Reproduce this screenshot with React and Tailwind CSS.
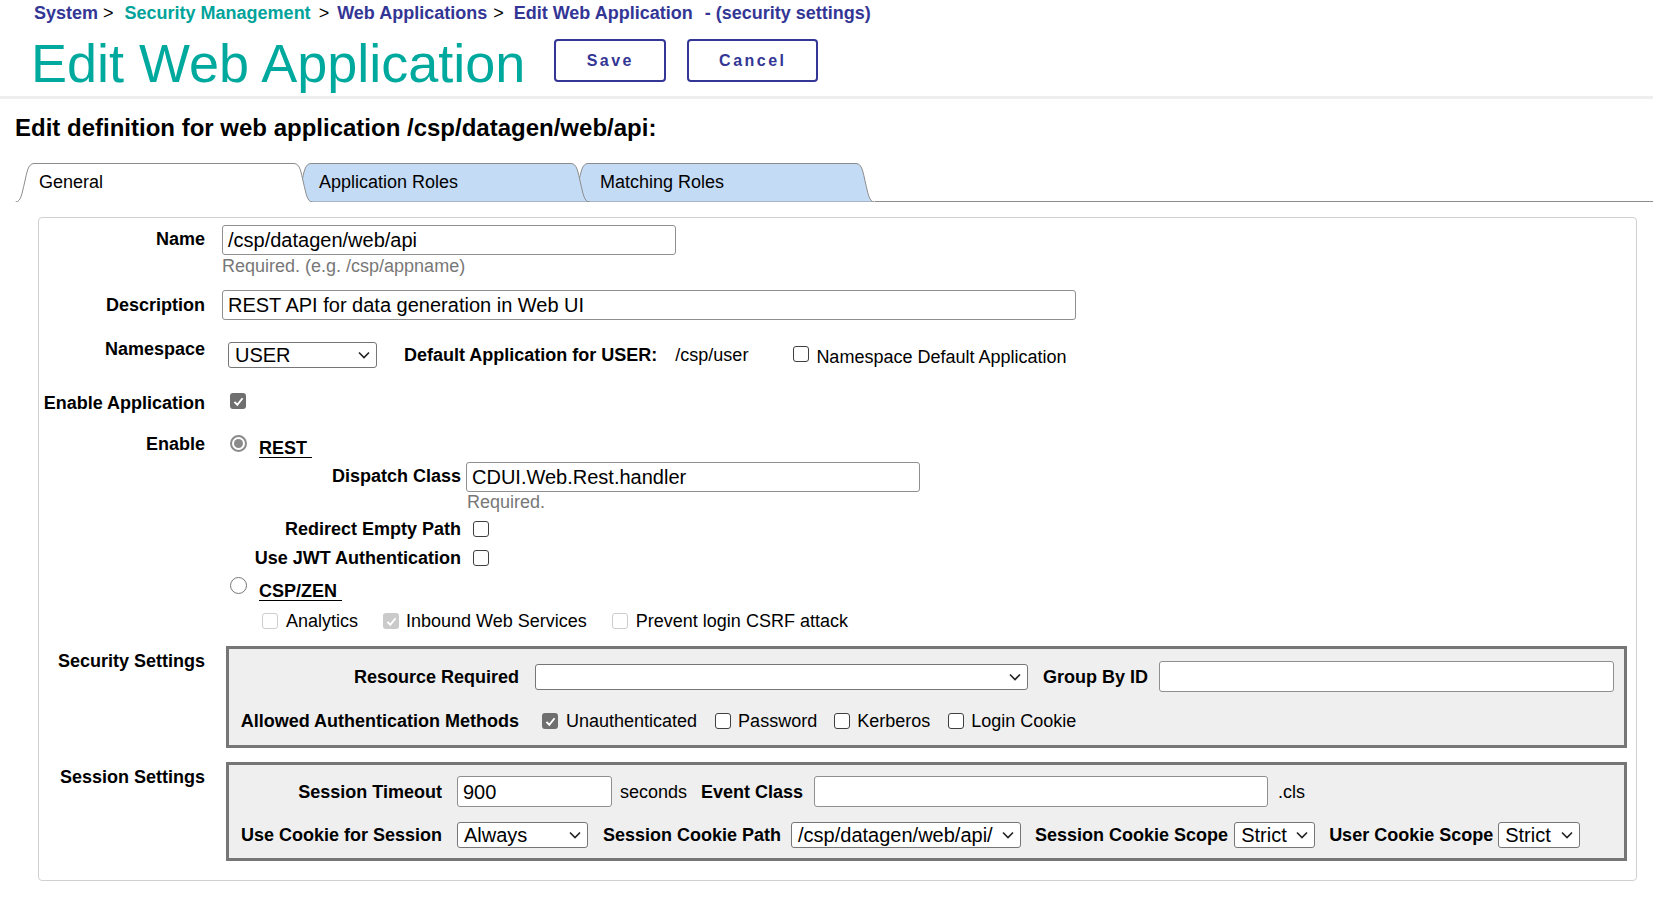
import React from 'react';

var label = 'text-[18px] font-bold leading-[22px] text-black whitespace-nowrap';
var plain = 'text-[18px] leading-[22px] text-black whitespace-nowrap';

function Chevron() {
  return (
    <svg width="12" height="8" viewBox="0 0 12 8" className="shrink-0">
      <path d="M1 1.5 L6 6.5 L11 1.5" stroke="#222" strokeWidth="1.6" fill="none" />
    </svg>
  );
}

function Select({ className, text }) {
  return (
    <div className={'flex items-center justify-between h-[26px] border border-[#767676] rounded-[3px] bg-white pl-[6px] pr-[6px] text-[20px] leading-none text-black whitespace-nowrap shrink-0 ' + className}>
      <span>{text}</span>
      <Chevron />
    </div>
  );
}

function Input({ className, children }) {
  return (
    <div className={'flex items-center border border-[#8f8f8f] rounded-[3px] bg-white px-[5px] text-[20px] leading-none text-black whitespace-nowrap shrink-0 ' + className}>
      {children}
    </div>
  );
}

function Check({ checked, disabled, className }) {
  if (checked) {
    return (
      <span className={'w-4 h-4 rounded-[3px] flex items-center justify-center shrink-0 ' + (disabled ? 'bg-[#cacaca] ' : 'bg-[#6f6f6f] ') + (className || '')}>
        <svg viewBox="0 0 16 16" className="w-[13px] h-[13px]">
          <path d="M3 8.5 L6.5 12 L13 4" stroke="white" strokeWidth="2.4" fill="none" />
        </svg>
      </span>
    );
  }
  return (
    <span className={'w-4 h-4 rounded-[3px] border bg-white shrink-0 ' + (disabled ? 'border-[#cdcdcd] ' : 'border-[#3f3f3f] ') + (className || '')} />
  );
}

function Radio({ checked, className }) {
  if (checked) {
    return (
      <span className={'w-[17px] h-[17px] rounded-full border-2 border-[#8a8a8a] bg-white flex items-center justify-center shrink-0 ' + className}>
        <span className="w-[9px] h-[9px] rounded-full bg-[#8a8a8a]" />
      </span>
    );
  }
  return <span className={'w-[17px] h-[17px] rounded-full border border-[#767676] bg-white shrink-0 ' + className} />;
}

function Tab({ title, width, active, pl, z, first }) {
  var w = width;
  var d = 'M0.5,39 C6,39 7,30 9.5,20 C12,9 13,0.5 19,0.5 L' + (w - 19) + ',0.5 C' + (w - 13) + ',0.5 ' + (w - 12) + ',9 ' + (w - 9.5) + ',20 C' + (w - 7) + ',30 ' + (w - 6) + ',39 ' + (w - 0.5) + ',39';
  return (
    <div className={'relative h-[39px] shrink-0 ' + z + (first ? '' : ' -ml-[21px]')} style={{ width: w }}>
      <svg width={w} height="39" className="absolute inset-0">
        <path d={active ? d : d + ' Z'} fill={active ? '#ffffff' : '#c4dbf6'} stroke="#8c8c8c" strokeWidth="1" />
      </svg>
      <div className={'relative h-full flex items-center text-[18px] text-black ' + pl}>{title}</div>
    </div>
  );
}

export default function App() {
  return (
    <div className="w-[1653px] h-[897px] bg-white overflow-hidden font-['Liberation_Sans',Arial,sans-serif] text-black">
      {/* header */}
      <div className="border-b-[3px] border-[#eeeeee] pb-[6px]">
        <div className="h-[26px] pt-[2px] pl-[34px] flex items-start text-[18px] leading-[22px] whitespace-nowrap">
          <span className="font-bold text-[#333695]">System</span>
          <span className="ml-[5px] mr-[11px]">&gt;</span>
          <span className="font-bold text-[#00a39a]">Security Management</span>
          <span className="ml-[8px] mr-[8px]">&gt;</span>
          <span className="font-bold text-[#333695]">Web Applications</span>
          <span className="ml-[6px] mr-[10px]">&gt;</span>
          <span className="font-bold text-[#333695]">Edit Web Application</span>
          <span className="ml-[12px] font-bold text-[#333695]">- (security settings)</span>
        </div>
        <div className="mt-[11px] pl-[31px] flex items-start">
          <h1 className="text-[54px] leading-[53px] text-[#00a99d] whitespace-nowrap">Edit Web Application</h1>
          <button className="ml-[29px] mt-[2px] w-[112px] h-[43px] border-2 border-[#333695] rounded-[4px] text-[16px] font-bold tracking-[2.5px] text-[#333695] bg-white">Save</button>
          <button className="ml-[21px] mt-[2px] w-[131px] h-[43px] border-2 border-[#333695] rounded-[4px] text-[16px] font-bold tracking-[2.5px] text-[#333695] bg-white">Cancel</button>
        </div>
      </div>

      <h2 className="mt-[15px] pl-[15px] text-[24px] leading-[28px] font-bold whitespace-nowrap">Edit definition for web application /csp/datagen/web/api:</h2>

      {/* tabs */}
      <div className="mt-[21px] pl-[15px] flex items-end">
        <Tab title="General" width={298} active pl="pl-[24px]" z="z-30" first />
        <Tab title="Application Roles" width={298} pl="pl-[27px]" z="z-20" />
        <Tab title="Matching Roles" width={306} pl="pl-[31px]" z="z-10" />
        <div className="flex-1 h-[39px] border-b border-[#8c8c8c]" />
      </div>

      {/* main form */}
      <div className="ml-[38px] mt-[15px] w-[1599px] border border-[#d0d0d0] rounded-[4px] pt-[7px] pb-[19px]">
        <div className="flex items-start">
          <div className={label + ' w-[166px] text-right pt-[3px]'}>Name</div>
          <Input className="ml-[17px] w-[454px] h-[30px]">/csp/datagen/web/api</Input>
        </div>
        <div className="mt-[1px] ml-[183px] text-[18px] leading-[20px] text-[#777777]">Required. (e.g. /csp/appname)</div>

        <div className="mt-[14px] flex items-start">
          <div className={label + ' w-[166px] text-right pt-[4px]'}>Description</div>
          <Input className="ml-[17px] w-[854px] h-[30px]">REST API for data generation in Web UI</Input>
        </div>

        <div className="mt-[18px] flex items-start">
          <div className={label + ' w-[166px] text-right'}>Namespace</div>
          <div className="ml-[23px] mt-[4px] h-[26px] flex items-center">
            <Select className="w-[149px]" text="USER" />
            <span className={label + ' ml-[27px]'}>Default Application for USER:</span>
            <span className={plain + ' ml-[18px]'}>/csp/user</span>
            <Check className="ml-[45px] -mt-[2px]" />
            <span className={plain + ' ml-[7px] mt-[3px] text-[#333]'}>Namespace Default Application</span>
          </div>
        </div>

        <div className="mt-[24px] flex items-start">
          <div className={label + ' w-[166px] text-right'}>Enable Application</div>
          <Check checked className="ml-[25px] mt-[1px]" />
        </div>

        <div className="mt-[19px] flex items-start">
          <div className={label + ' w-[166px] text-right'}>Enable</div>
          <Radio checked className="ml-[25px] mt-[2px]" />
          <span className={label + ' ml-[12px] mt-[4px] underline underline-offset-[3px]'}>REST&nbsp;</span>
        </div>

        <div className="mt-[3px] flex items-start">
          <div className={label + ' w-[422px] text-right pt-[3px]'}>Dispatch Class</div>
          <Input className="ml-[5px] w-[454px] h-[30px]">CDUI.Web.Rest.handler</Input>
        </div>
        <div className="ml-[428px] text-[18px] leading-[20px] text-[#777777]">Required.</div>

        <div className="mt-[6px] h-[22px] flex items-center">
          <div className={label + ' w-[422px] text-right'}>Redirect Empty Path</div>
          <Check className="ml-[12px]" />
        </div>
        <div className="mt-[7px] h-[22px] flex items-center">
          <div className={label + ' w-[422px] text-right'}>Use JWT Authentication</div>
          <Check className="ml-[12px]" />
        </div>

        <div className="mt-[6px] h-[22px] flex items-start">
          <Radio className="ml-[191px] mt-[2px]" />
          <span className={label + ' ml-[12px] mt-[5px] underline underline-offset-[3px]'}>CSP/ZEN&nbsp;</span>
        </div>

        <div className="mt-[13px] h-[22px] flex items-center ml-[223px]">
          <Check disabled />
          <span className={plain + ' ml-[8px] text-[#8f8f8f]'}>Analytics</span>
          <Check disabled checked className="ml-[25px]" />
          <span className={plain + ' ml-[7px] text-[#8f8f8f]'}>Inbound Web Services</span>
          <Check disabled className="ml-[25px]" />
          <span className={plain + ' ml-[8px] text-[#8f8f8f]'}>Prevent login CSRF attack</span>
        </div>

        {/* security settings */}
        <div className="mt-[14px] flex items-start">
          <div className={label + ' w-[166px] text-right pt-[4px]'}>Security Settings</div>
          <div className="ml-[21px] w-[1401px] border-[3px] border-[#767676] bg-[#efefef] pt-[10px] pb-[11px]">
            <div className="h-[35px] flex items-center">
              <div className={label + ' w-[290px] text-right'}>Resource Required</div>
              <Select className="ml-[16px] w-[493px]" text="" />
              <span className={label + ' ml-[15px]'}>Group By ID</span>
              <Input className="ml-[11px] w-[455px] h-[31px]" />
            </div>
            <div className="mt-[14px] h-[26px] flex items-center">
              <div className={label + ' w-[290px] text-right'}>Allowed Authentication Methods</div>
              <Check checked className="ml-[23px]" />
              <span className={plain + ' ml-[8px] text-[#333]'}>Unauthenticated</span>
              <Check className="ml-[18px]" />
              <span className={plain + ' ml-[7px] text-[#333]'}>Password</span>
              <Check className="ml-[17px]" />
              <span className={plain + ' ml-[7px] text-[#333]'}>Kerberos</span>
              <Check className="ml-[18px]" />
              <span className={plain + ' ml-[7px] text-[#333]'}>Login Cookie</span>
            </div>
          </div>
        </div>

        {/* session settings */}
        <div className="mt-[14px] flex items-start">
          <div className={label + ' w-[166px] text-right pt-[4px]'}>Session Settings</div>
          <div className="ml-[21px] w-[1401px] border-[3px] border-[#767676] bg-[#efefef] pt-[11px] pb-[10px]">
            <div className="h-[31px] flex items-center">
              <div className={label + ' w-[213px] text-right'}>Session Timeout</div>
              <Input className="ml-[15px] w-[155px] h-[31px]">900</Input>
              <span className={plain + ' ml-[8px] text-[#999999]'}>seconds</span>
              <span className={label + ' ml-[14px]'}>Event Class</span>
              <Input className="ml-[11px] w-[454px] h-[31px]" />
              <span className={plain + ' ml-[10px] text-[#999999]'}>.cls</span>
            </div>
            <div className="mt-[15px] h-[26px] flex items-center">
              <div className={label + ' w-[213px] text-right'}>Use Cookie for Session</div>
              <Select className="ml-[15px] w-[131px]" text="Always" />
              <span className={label + ' ml-[15px]'}>Session Cookie Path</span>
              <Select className="ml-[10px] w-[230px]" text="/csp/datagen/web/api/" />
              <span className={label + ' ml-[14px]'}>Session Cookie Scope</span>
              <Select className="ml-[6px] w-[81px]" text="Strict" />
              <span className={label + ' ml-[14px]'}>User Cookie Scope</span>
              <Select className="ml-[5px] w-[82px]" text="Strict" />
            </div>
          </div>
        </div>
      </div>
    </div>
  );
}
